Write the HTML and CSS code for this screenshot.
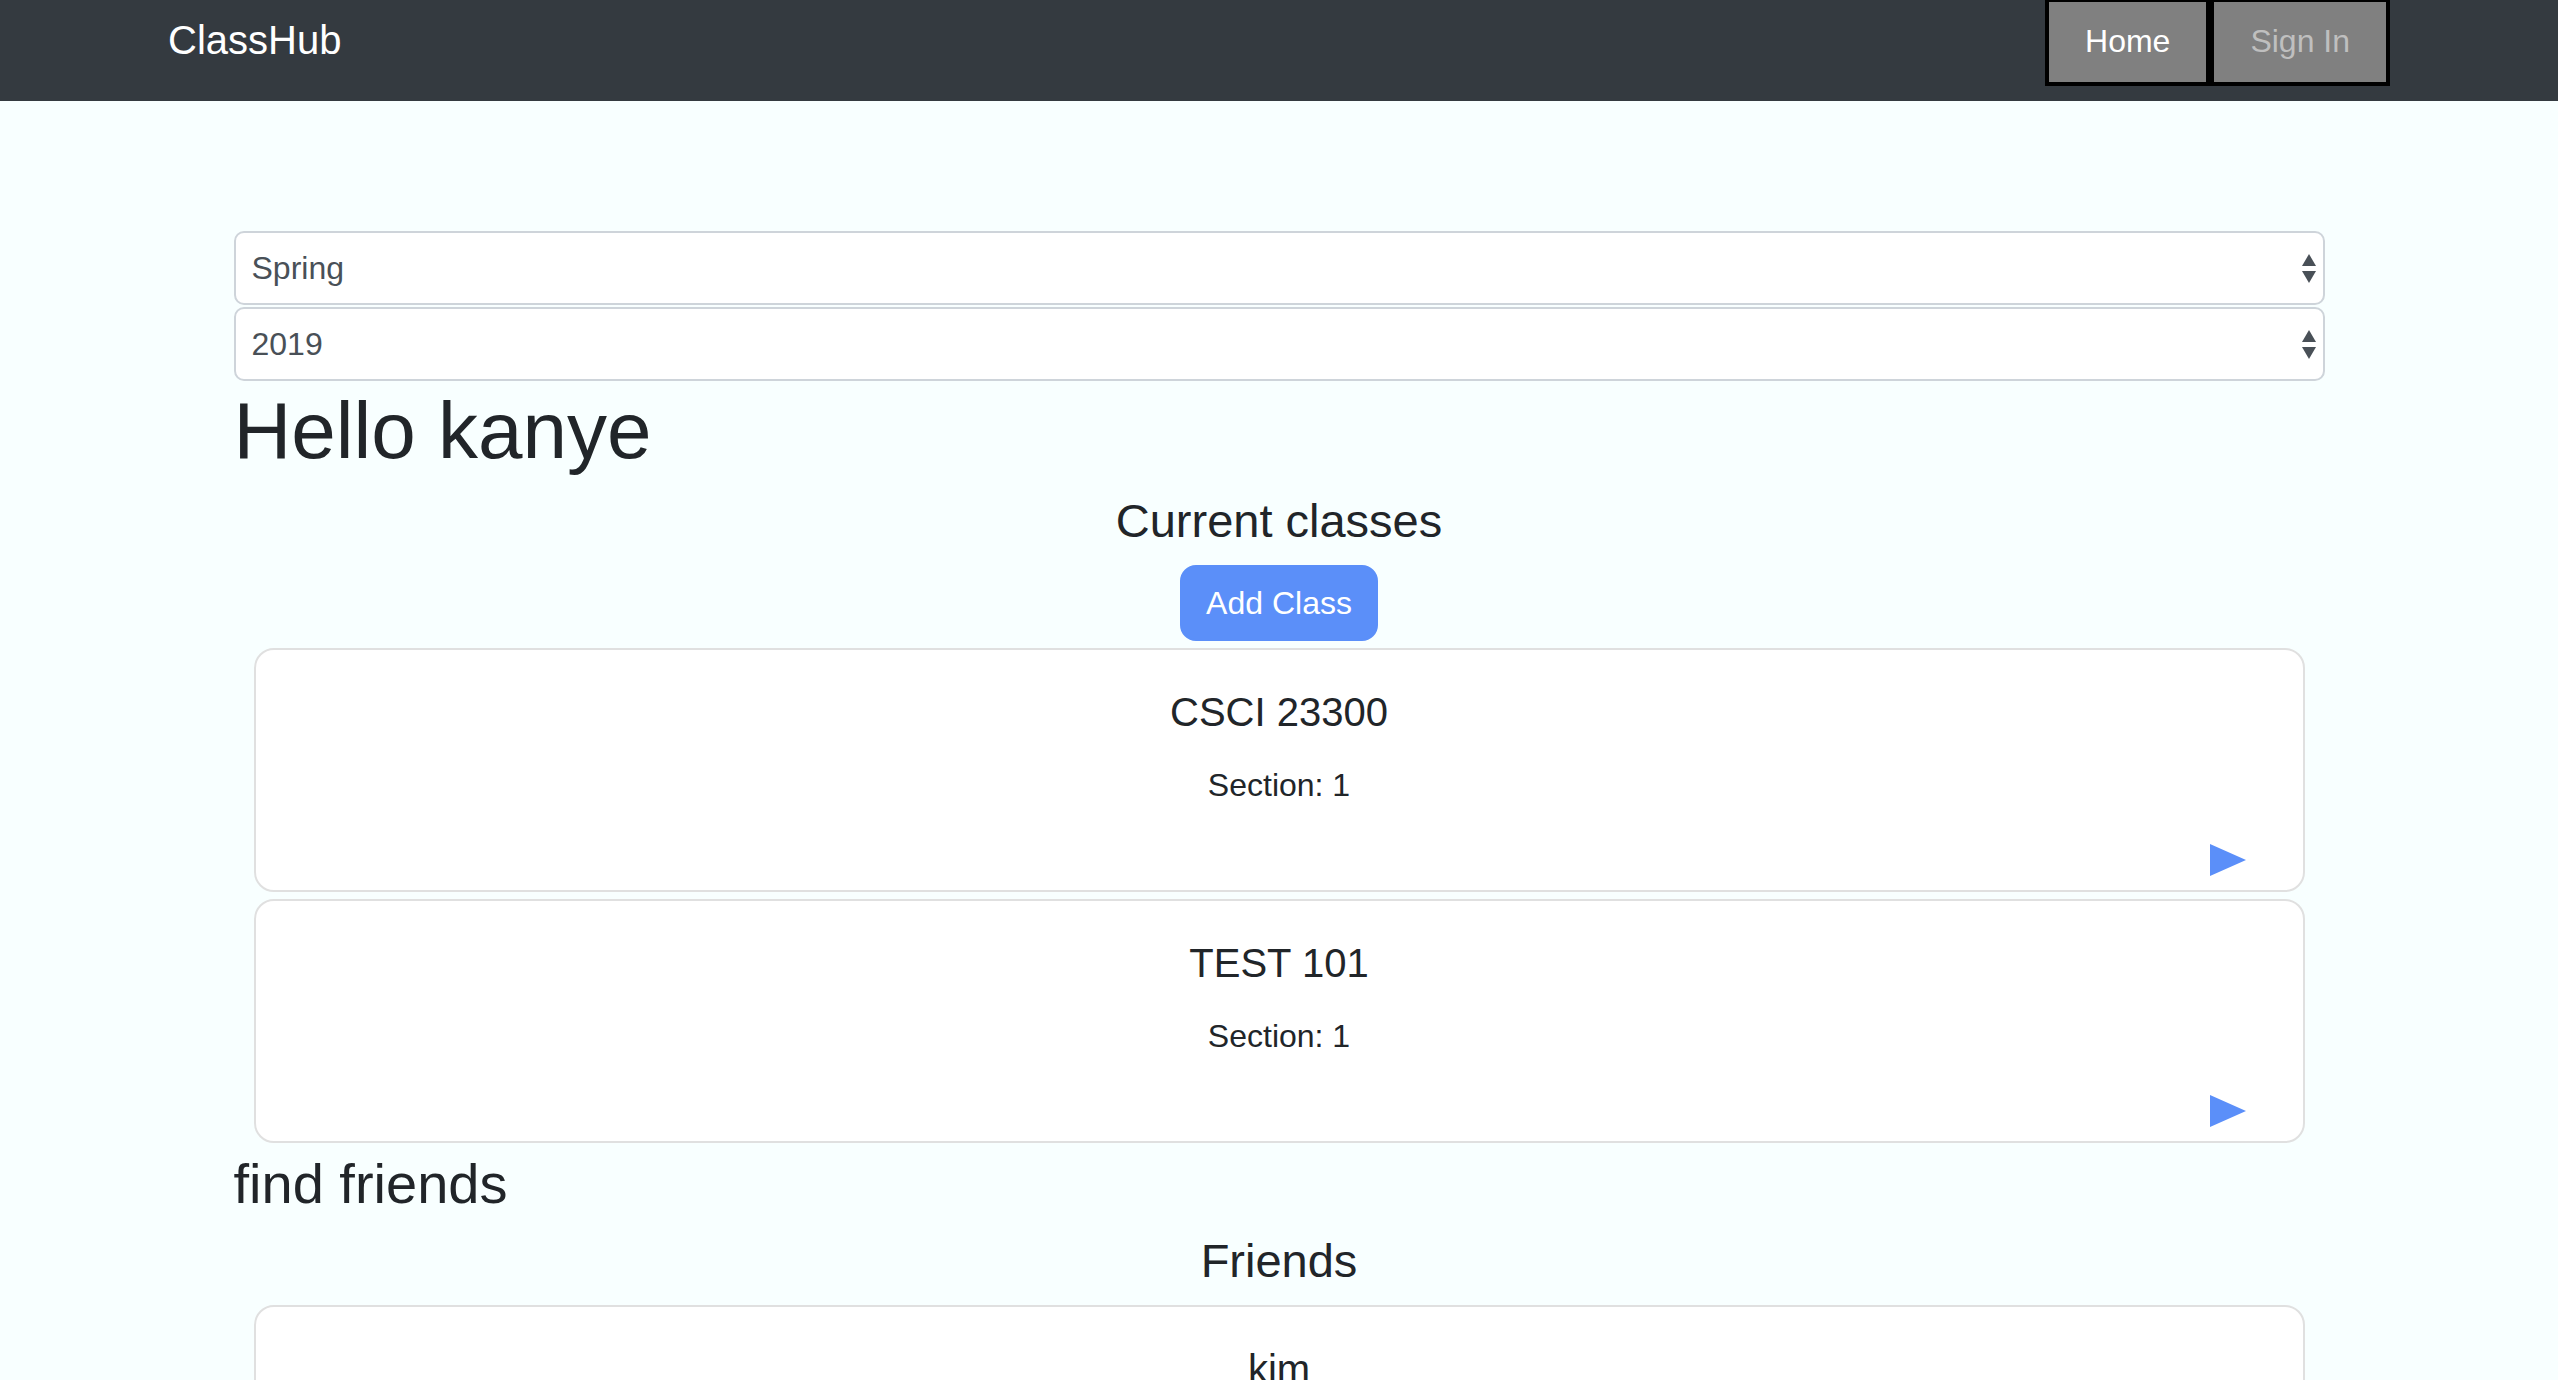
FILE: index.html
```html
<!DOCTYPE html>
<html lang="en">
<head>
<meta charset="utf-8">
<title>ClassHub</title>
<link rel="stylesheet" href="styles.css">
</head>
<body>
<nav class="navbar">
  <a class="brand" href="#">ClassHub</a>
  <div class="nav-buttons">
    <a class="nav-btn active" href="#">Home</a>
    <a class="nav-btn" href="#">Sign In</a>
  </div>
</nav>

<main class="container">
  <div class="select">
    <span>Spring</span>
    <svg class="arrows" width="14" height="29" viewBox="0 0 14 29"><polygon points="0,12 14,12 7,0"/><polygon points="0,17 14,17 7,29"/></svg>
  </div>
  <div class="select">
    <span>2019</span>
    <svg class="arrows" width="14" height="29" viewBox="0 0 14 29"><polygon points="0,12 14,12 7,0"/><polygon points="0,17 14,17 7,29"/></svg>
  </div>

  <h1 class="hello">Hello kanye</h1>

  <h4 class="section-title">Current classes</h4>
  <div class="center">
    <button class="btn-add">Add Class</button>
  </div>

  <div class="card">
    <h5 class="card-title">CSCI 23300</h5>
    <p class="card-text">Section: 1</p>
    <div class="card-foot">
      <svg width="36" height="32" viewBox="0 0 36 32"><polygon points="0,0 36,16 0,32"/></svg>
    </div>
  </div>
  <div class="card">
    <h5 class="card-title">TEST 101</h5>
    <p class="card-text">Section: 1</p>
    <div class="card-foot">
      <svg width="36" height="32" viewBox="0 0 36 32"><polygon points="0,0 36,16 0,32"/></svg>
    </div>
  </div>

  <h3 class="find">find friends</h3>

  <h4 class="section-title">Friends</h4>
  <div class="card">
    <h5 class="card-title">kim</h5>
    <p class="card-text">&nbsp;</p>
  </div>
</main>
</body>
</html>
```

FILE: styles.css
```css
html {
  scrollbar-width: none;
}
html::-webkit-scrollbar {
  display: none;
}
body {
  margin: 0;
  background: #f8ffff;
  font-family: "Liberation Sans", Arial, Helvetica, sans-serif;
  color: #212529;
}

.navbar {
  height: 101px;
  background: #343a40;
  display: flex;
  justify-content: space-between;
  align-items: flex-start;
  padding: 0 168px 0 168px;
  box-sizing: border-box;
  overflow: hidden;
}
.brand {
  margin-top: 10px;
  font-size: 40px;
  line-height: 60px;
  color: #fff;
  text-decoration: none;
}
.nav-buttons {
  display: flex;
  margin-top: -2px;
}
.nav-btn {
  display: block;
  height: 80px;
  line-height: 78px;
  padding: 0 36px;
  border: 4px solid #000;
  background: #808080;
  color: #bfbfbf;
  font-size: 32px;
  text-decoration: none;
}
.nav-btn.active {
  color: #fff;
}

.container {
  width: 2091px;
  margin: 0 auto;
  padding-top: 130px;
}

.select {
  height: 74px;
  box-sizing: border-box;
  margin-bottom: 2px;
  border: 2px solid #ced4da;
  border-radius: 10px;
  background: #fff;
  display: flex;
  align-items: center;
  justify-content: space-between;
  padding: 0 7px 0 16px;
  font-size: 32px;
  color: #495057;
}
.select .arrows {
  display: block;
  fill: #495057;
}

.hello {
  margin: 0 0 14px;
  font-size: 80px;
  line-height: 96px;
  font-weight: normal;
}

.section-title {
  margin: 0 0 16px;
  font-size: 47px;
  line-height: 56px;
  font-weight: normal;
  text-align: center;
}

.center {
  text-align: center;
}
.btn-add {
  font-family: inherit;
  font-size: 32px;
  line-height: 48px;
  padding: 12px 24px;
  border: 2px solid #5b8ff9;
  border-radius: 16px;
  background: #5b8ff9;
  color: #fff;
  cursor: pointer;
}

.card {
  margin: 7px 20px;
  background: #fff;
  border: 2px solid #e0e0e0;
  border-radius: 20px;
  padding: 38px 57px 14px;
  text-align: center;
}
.card-title {
  margin: 0 0 25px;
  font-size: 40px;
  line-height: 48px;
  font-weight: normal;
}
.card-text {
  margin: 0;
  font-size: 32px;
  line-height: 48px;
}
.card-foot {
  display: flex;
  justify-content: flex-end;
  margin-top: 35px;
}
.card-foot svg {
  display: block;
  fill: #5b8ff9;
}

.find {
  margin: 0 0 16px;
  font-size: 56px;
  line-height: 67px;
  font-weight: normal;
}
```
